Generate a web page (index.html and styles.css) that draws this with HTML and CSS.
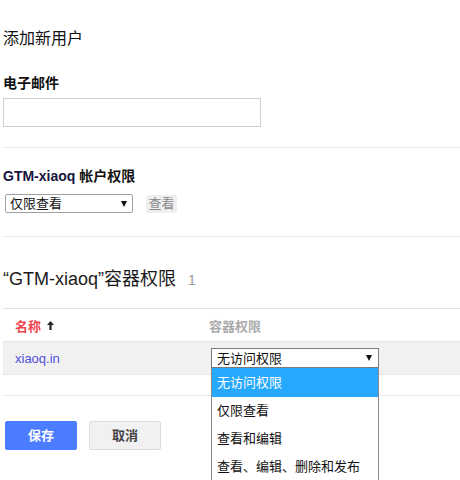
FILE: index.html
```html
<!DOCTYPE html>
<html lang="zh-CN">
<head>
<meta charset="utf-8">
<title>添加新用户</title>
<link rel="stylesheet" href="styles.css">
</head>
<body>
<div class="page">
  <h1 class="title">添加新用户</h1>

  <div class="label">电子邮件</div>
  <div class="text-input"></div>

  <div class="divider"></div>

  <div class="label label-account"><span class="latin">GTM-xiaoq</span> 帐户权限</div>
  <div class="account-row">
    <div class="select select-account">
      <span class="select-text">仅限查看</span>
      <span class="caret"></span>
    </div>
    <span class="view-btn">查看</span>
  </div>

  <div class="divider divider-2"></div>

  <h2 class="container-title">“GTM-xiaoq”容器权限<span class="count">1</span></h2>

  <div class="divider divider-3"></div>

  <div class="table">
    <div class="thead">
      <div class="col col-name sort">名称
        <svg class="sort-arrow" width="7" height="9" viewBox="0 0 7 9"><path d="M3.5 0 L7 4 L4.6 4 L4.6 9 L2.4 9 L2.4 4 L0 4 Z" fill="#222"/></svg>
      </div>
      <div class="col col-perm">容器权限</div>
    </div>
    <div class="trow">
      <div class="col col-name"><span class="link">xiaoq.in</span></div>
      <div class="col col-perm">
        <div class="select select-perm">
          <span class="select-text">无访问权限</span>
          <span class="caret"></span>
          <ul class="dropdown">
            <li class="opt active">无访问权限</li>
            <li class="opt">仅限查看</li>
            <li class="opt">查看和编辑</li>
            <li class="opt">查看、编辑、删除和发布</li>
          </ul>
        </div>
      </div>
    </div>
  </div>

  <div class="divider divider-4"></div>

  <div class="actions">
    <span class="btn btn-primary">保存</span>
    <span class="btn btn-default">取消</span>
  </div>

  <div class="bottom-line"></div>
</div>
</body>
</html>
```

FILE: styles.css
```css
html, body {
  margin: 0;
  padding: 0;
  overflow: hidden;
  background: #fff;
}

body {
  font-family: "Liberation Sans", Arial, "Noto Sans CJK SC", sans-serif;
  color: #222;
  font-size: 13px;
}

.page {
  padding-left: 3px;
}

.title {
  margin: 29px 0 0;
  font-size: 16px;
  line-height: 20px;
  font-weight: normal;
  color: #111;
}

.label {
  margin-top: 25px;
  font-size: 14px;
  line-height: 18px;
  font-weight: bold;
  color: #111;
}

.latin {
  font-weight: 600;
  color: #14143c;
}

.text-input {
  margin-top: 6px;
  width: 256px;
  height: 27px;
  border: 1px solid #cfcfcf;
  background: #fff;
}

.divider {
  margin-top: 20px;
  height: 0;
  border-top: 1px solid #ececec;
}

.label-account {
  margin-top: 19px;
}

.account-row {
  margin-top: 9px;
  display: flex;
  align-items: center;
}

.select {
  position: relative;
  display: flex;
  align-items: center;
  box-sizing: border-box;
  background: #fff;
  font-size: 13px;
  color: #111;
}

.select-account {
  margin-left: 2px;
  width: 128px;
  height: 19px;
  border: 1px solid #a0a0a0;
  border-radius: 2px;
  padding-left: 4px;
}

.select-text {
  flex: 1;
  line-height: 17px;
}

.caret {
  width: 0;
  height: 0;
  border-left: 3px solid transparent;
  border-right: 3px solid transparent;
  border-top: 6px solid #111;
  margin-right: 5px;
}

.view-btn {
  margin-left: 13px;
  width: 31px;
  height: 18px;
  line-height: 18px;
  text-align: center;
  background: #efefef;
  color: #888;
  font-size: 13px;
  border-radius: 2px;
}

.divider-2 {
  margin-top: 23px;
}

.container-title {
  margin: 31px 0 0;
  font-size: 18px;
  line-height: 22px;
  font-weight: normal;
  color: #1a1a1a;
}

.count {
  margin-left: 12px;
  font-size: 14px;
  color: #999;
}

.divider-3 {
  margin-top: 17px;
  border-top-color: #e4e4e4;
}

.table {
  display: flex;
  flex-direction: column;
}

.thead,
.trow {
  display: flex;
  align-items: center;
}

.thead {
  height: 32px;
  font-weight: bold;
  font-size: 13px;
}

.trow {
  height: 32px;
  background: #f1f1f1;
  border-top: 1px solid #e6e6e6;
  border-bottom: 1px solid #e6e6e6;
}

.col-name {
  width: 194px;
  padding-left: 12px;
  display: flex;
  align-items: center;
}

.sort {
  color: #f0444c;
}

.sort-arrow {
  margin-left: 6px;
}

.col-perm {
  flex: 1;
  color: #aaa;
}

.link {
  color: #4f4fdc;
  font-size: 13px;
}

.select-perm {
  margin-left: 2px;
  width: 168px;
  height: 20px;
  border: 1px solid #7a7a7a;
  padding-left: 5px;
  color: #111;
}

.select-perm .caret {
  margin-right: 6px;
}

.dropdown {
  position: absolute;
  left: -1px;
  top: 19px;
  width: 168px;
  box-sizing: border-box;
  margin: 0;
  padding: 0;
  list-style: none;
  background: #fff;
  border: 1px solid #8a8a8a;
  border-top: 0;
  z-index: 5;
}

.opt {
  height: 28px;
  line-height: 28px;
  padding-left: 5px;
  font-size: 13px;
  color: #111;
  white-space: nowrap;
}

.opt.active {
  height: 29px;
  line-height: 29px;
  background: #26a8ff;
  color: #fff;
}

.divider-4 {
  margin-top: 20px;
}

.actions {
  margin-top: 25px;
  display: flex;
  gap: 12px;
  padding-left: 2px;
}

.btn {
  box-sizing: border-box;
  width: 72px;
  height: 29px;
  line-height: 27px;
  text-align: center;
  font-weight: bold;
  font-size: 13px;
  border-radius: 2px;
}

.btn-primary {
  background: #4c7cff;
  color: #fff;
  border: 1px solid #4c7cff;
}

.btn-default {
  background: #f1f1f1;
  color: #444;
  border: 1px solid #dcdcdc;
}

.bottom-line {
  margin-top: 30px;
  border-top: 1px solid #cfcfcf;
}
```
